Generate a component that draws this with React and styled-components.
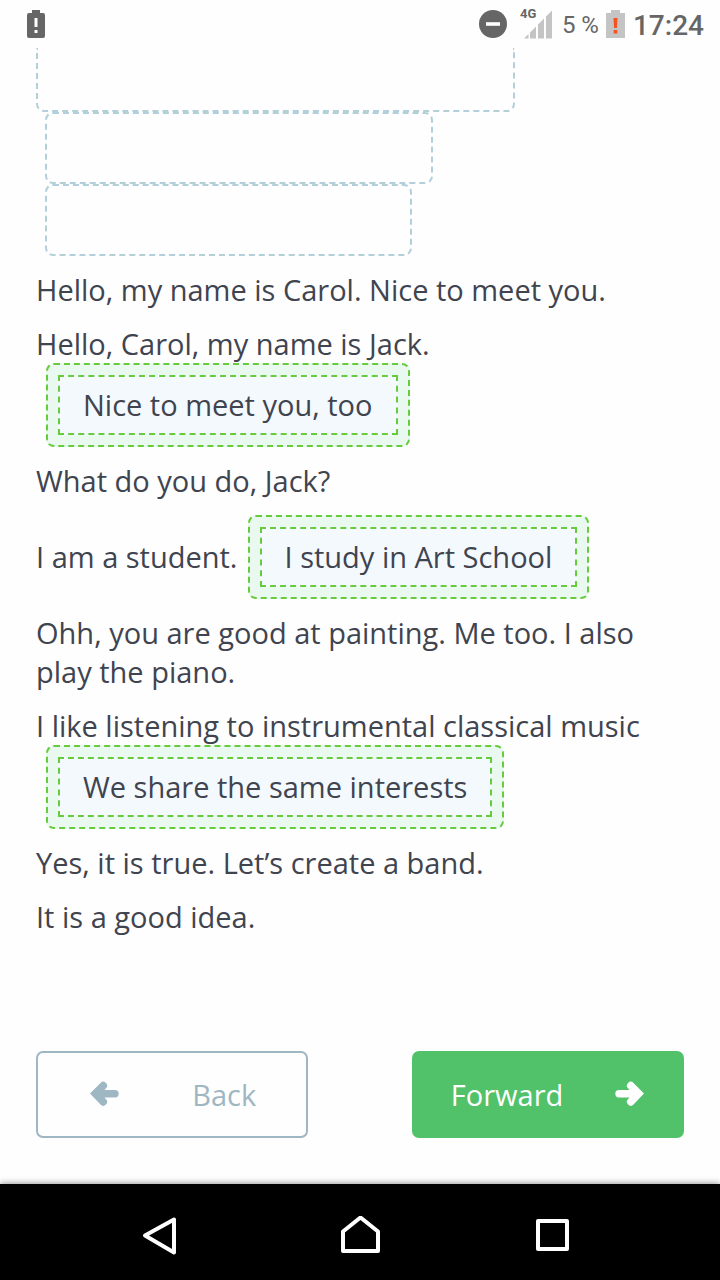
import React from "react";
import styled, { createGlobalStyle } from "styled-components";

const GlobalStyle = createGlobalStyle`
  * {
    box-sizing: border-box;
  }

  body {
    margin: 0;
    background: #fefefe;
    color: #40444f;
    font-family: "Open Sans", "Noto Sans", sans-serif;
    font-size: 29px;
    line-height: 39px;
  }
`;

const Screen = styled.div`
  display: flex;
  flex-direction: column;
  min-height: 100vh;
`;

const StatusBar = styled.header`
  display: flex;
  align-items: center;
  height: 48px;
  padding: 0 16px 0 27px;
  color: #666;
  font-family: Roboto, sans-serif;
`;

const StatusIcon = styled.svg`
  display: block;
  flex: none;
`;

const StatusGroup = styled.div`
  display: flex;
  align-items: center;
  margin-left: auto;
`;

const Signal = styled.div`
  position: relative;
  margin: 0 10px 0 17px;
`;

const Network = styled.span`
  position: absolute;
  top: -2px;
  left: -4px;
  font-size: 13px;
  font-weight: 700;
  line-height: 14px;
`;

const Charge = styled.span`
  margin-right: 7px;
  padding-top: 2px;
  font-size: 24px;
`;

const Clock = styled.time`
  margin-left: 8px;
  padding-top: 2px;
  font-size: 28px;
  font-weight: 500;
`;

const Content = styled.main`
  flex: 1;
  padding: 0 36px;
`;

const Blank = styled.div`
  width: ${({ $width }) => $width};
  height: 72px;
  margin-left: 9px;
  border: 2px dashed #b3d0da;
  border-radius: 8px;
`;

// scrolled partly under the status bar
const CutBlank = styled(Blank)`
  height: 64px;
  margin-left: 0;
  border-top: 0;
  border-radius: 0 0 8px 8px;
`;

const Dialogue = styled.div`
  display: flex;
  flex-direction: column;
  gap: 15px;
  margin-top: 14px;
`;

const Line = styled.p`
  display: flex;
  flex-wrap: wrap;
  align-items: center;
  margin: 0;
`;

const DropZone = styled.span`
  margin: 0 0 -1px 10px;
  padding: 10px;
  background: #eaf9f0;
  border: 2px dashed #66cc3d;
  border-radius: 8px;
`;

const Answer = styled.span`
  display: block;
  padding: 8px 23px;
  background: #f4f9fe;
  border: 2px dashed #66cc3d;
  line-height: 40px;
`;

const Actions = styled.div`
  display: flex;
  justify-content: space-between;
  padding: 0 36px 46px;
`;

const ActionButton = styled.button`
  display: flex;
  align-items: center;
  justify-content: space-between;
  width: 42%;
  height: 87px;
  padding: ${({ $primary }) => ($primary ? "0 38px 0 37px" : "0 50px 0 52px")};
  color: ${({ $primary }) => ($primary ? "#fff" : "#9fb6c3")};
  background: ${({ $primary }) => ($primary ? "#52c26a" : "transparent")};
  border: 2px solid ${({ $primary }) => ($primary ? "#52c26a" : "#9fb6c3")};
  border-radius: 7px;
  font: inherit;
`;

const NavBar = styled.nav`
  display: flex;
  align-items: center;
  justify-content: space-between;
  height: 96px;
  padding: 8px 148px 0 140px;
  background: #000;
  box-shadow: 0 -1px 6px rgba(0, 0, 0, 0.4);
`;

const NavButton = styled.button`
  display: block;
  padding: 0;
  background: none;
  border: 0;

  svg {
    display: block;
    fill: none;
    stroke: #fff;
    stroke-width: 4;
    stroke-linejoin: round;
  }
`;

const ArrowLeft = () => (
  <svg width="29" height="28" viewBox="0 0 29 28" fill="currentColor">
    <path d="M0 12.500 10.500 2A3.800 3.800 0 0 1 16 7.300L14.500 9H25a3.700 3.700 0 0 1 0 7.400H14.500L16 18.200A3.800 3.800 0 0 1 10.500 23.500z" />
  </svg>
);

const ArrowRight = () => (
  <svg width="29" height="28" viewBox="0 0 29 28" fill="currentColor">
    <path d="M29 12.500 18.500 2A3.800 3.800 0 0 0 13 7.300L14.500 9H4a3.700 3.700 0 0 0 0 7.400H14.500L13 18.200A3.800 3.800 0 0 0 18.500 23.500z" />
  </svg>
);

const dialogue = [
  { text: "Hello, my name is Carol. Nice to meet you." },
  { text: "Hello, Carol, my name is Jack.", answer: "Nice to meet you, too" },
  { text: "What do you do, Jack?" },
  { text: "I am a student.", answer: "I study in Art School" },
  { text: "Ohh, you are good at painting. Me too. I also play the piano." },
  {
    text: "I like listening to instrumental classical music",
    answer: "We share the same interests",
  },
  { text: "Yes, it is true. Let’s create a band." },
  { text: "It is a good idea." },
];

const Status = () => (
  <StatusBar>
    <StatusIcon width="18" height="28" viewBox="0 0 18 28">
      <path d="M5 0h8v3h3a2 2 0 0 1 2 2v21a2 2 0 0 1-2 2H2a2 2 0 0 1-2-2V5a2 2 0 0 1 2-2h3z" fill="#666" />
      <path d="M7.5 8h3v9h-3zM7.5 20h3v3h-3z" fill="#fff" />
    </StatusIcon>
    <StatusGroup>
      <StatusIcon width="28" height="28" viewBox="0 0 28 28">
        <circle cx="14" cy="14" r="14" fill="#666" />
        <path d="M7 12.2h14v3.6H7z" fill="#fff" />
      </StatusIcon>
      <Signal>
        <Network>4G</Network>
        <StatusIcon width="28" height="30" viewBox="0 0 28 30" fill="#c4c4c4">
          <path d="M0 29.5 4.5 25v4.5zM6 23.5 12 17.5v12H6zM14 15.5 20 9.5v20h-6zM22 7.5 28 1.5v28h-6z" />
        </StatusIcon>
      </Signal>
      <Charge>5 %</Charge>
      <StatusIcon width="19" height="30" viewBox="0 0 19 30">
        <path d="M5 1h9v3h5v25H0V4h5z" fill="#c4c4c4" />
        <path d="M7.5 9h4l-.6 10H8.1zM7.7 21h3.6v3.5H7.7z" fill="#f4511e" />
      </StatusIcon>
      <Clock>17:24</Clock>
    </StatusGroup>
  </StatusBar>
);

const App = () => {
  return (
    <Screen>
      <GlobalStyle />
      <Status />
      <Content>
        <CutBlank $width="479px" />
        <Blank $width="388px" />
        <Blank $width="367px" />
        <Dialogue>
          {dialogue.map(({ text, answer }) => (
            <Line key={text}>
              <span>{text}</span>
              {answer && (
                <DropZone>
                  <Answer>{answer}</Answer>
                </DropZone>
              )}
            </Line>
          ))}
        </Dialogue>
      </Content>
      <Actions>
        <ActionButton type="button">
          <ArrowLeft />
          <span>Back</span>
        </ActionButton>
        <ActionButton type="button" $primary>
          <span>Forward</span>
          <ArrowRight />
        </ActionButton>
      </Actions>
      <NavBar>
        <NavButton type="button" aria-label="Back">
          <svg width="48" height="40" viewBox="0 0 48 40">
            <path d="M34 3.5v33L5 19.5z" />
          </svg>
        </NavButton>
        <NavButton type="button" aria-label="Home">
          <svg width="40" height="40" viewBox="0 0 40 40">
            <path d="M3 35V15.500L20.500 1.500 38 15.500V35z" />
          </svg>
        </NavButton>
        <NavButton type="button" aria-label="Recent apps">
          <svg width="40" height="40" viewBox="0 0 40 40">
            <path d="M6 5h29v28H6z" />
          </svg>
        </NavButton>
      </NavBar>
    </Screen>
  );
};

export default App;
